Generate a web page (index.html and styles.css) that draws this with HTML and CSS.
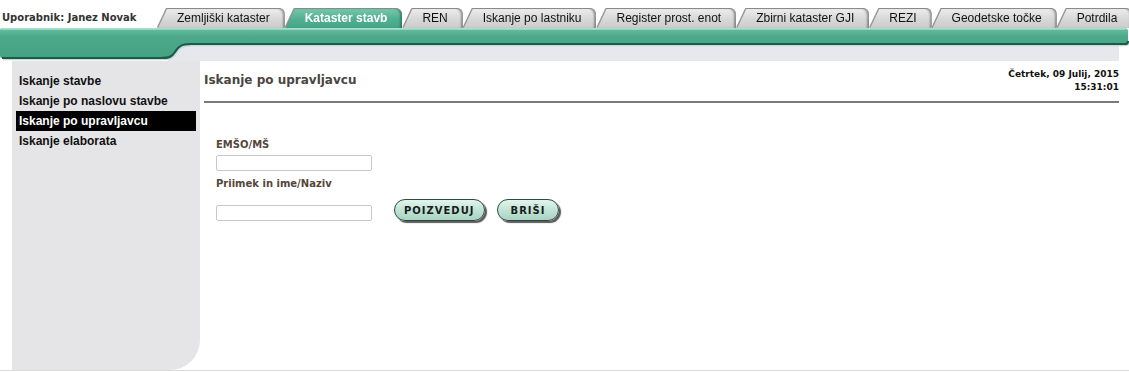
FILE: index.html
```html
<!DOCTYPE html>
<html lang="sl">
<head>
    <meta charset="UTF-8">
    <title>Kataster stavb - Iskanje po upravljavcu</title>
    <link rel="stylesheet" href="styles.css">
</head>
<body>
    <div class="top">
        <div class="user">Uporabnik: Janez Novak</div>
        <div class="tabs">
            <a class="tab">Zemljiški kataster</a>
            <a class="tab active">Kataster stavb</a>
            <a class="tab">REN</a>
            <a class="tab">Iskanje po lastniku</a>
            <a class="tab">Register prost. enot</a>
            <a class="tab">Zbirni kataster GJI</a>
            <a class="tab">REZI</a>
            <a class="tab">Geodetske točke</a>
            <a class="tab">Potrdila</a>
        </div>
    </div>

    <!-- zeleni trak pod zavihki -->
    <div class="band">
        <svg width="1129" height="33" viewBox="0 0 1129 33">
            <defs>
                <linearGradient id="g" x1="0" y1="0" x2="0" y2="30" gradientUnits="userSpaceOnUse">
                    <stop offset="0" stop-color="#a6ddc9"/>
                    <stop offset="0.08" stop-color="#5fb99a"/>
                    <stop offset="0.3" stop-color="#4caa8b"/>
                    <stop offset="1" stop-color="#44a283"/>
                </linearGradient>
            </defs>
            <rect x="168" y="14" width="951" height="19" fill="#e7e7ee"/>
            <path d="M0,2 Q0,0 2,0 H1125 Q1128,0 1128,3 V13 Q1128,16 1125,16 H191 C181,16 178,19 175,24 C172,29 169,30 161,30 H2 Q0,30 0,28 Z" fill="url(#g)"/>
            <path d="M1128,13 Q1128,16 1125,16 H191 C181,16 178,19 175,24 C172,29 169,30 161,30 H2" fill="none" stroke="#c9d9d3" stroke-width="1.5" transform="translate(1,1.5)"/>
            <path d="M1128,13 Q1128,16 1125,16 H191 C181,16 178,19 175,24 C172,29 169,30 161,30 H2" fill="none" stroke="#155e48" stroke-width="2.2"/>
            <path d="M2,1 H1125" stroke="#b8e6d6" stroke-width="1.2"/>
        </svg>
    </div>

    <div class="main">
        <div class="sidebar">
            <a class="menu-item">Iskanje stavbe</a>
            <a class="menu-item">Iskanje po naslovu stavbe</a>
            <a class="menu-item selected">Iskanje po upravljavcu</a>
            <a class="menu-item">Iskanje elaborata</a>
        </div>

        <div class="content">
            <div class="page-head">
                <h1>Iskanje po upravljavcu</h1>
                <div class="date">Četrtek, 09 Julij, 2015<br>15:31:01</div>
            </div>

            <form class="search-form">
                <label for="emso">EMŠO/MŠ</label>
                <input type="text" id="emso">

                <label for="naziv">Priimek in ime/Naziv</label>
                <div class="form-row">
                    <input type="text" id="naziv">
                    <button type="button" class="btn">POIZVEDUJ</button>
                    <button type="button" class="btn btn-clear">BRIŠI</button>
                </div>
            </form>
        </div>
    </div>
</body>
</html>
```

FILE: styles.css
```css
body {
    margin: 0;
    padding: 0;
    background-color: #fff;
    font-family: "DejaVu Sans", Verdana, sans-serif;
    color: #333;
}

a {
    text-decoration: none;
    cursor: pointer;
}

/* zgornja vrstica */
.top {
    height: 28px;
    display: flex;
    align-items: flex-end;
}

.user {
    flex: 0 0 156px;
    padding-left: 2px;
    font-size: 10px;
    font-weight: bold;
    color: #333;
    line-height: 12px;
    padding-bottom: 4px;
}

.tabs {
    display: flex;
    gap: 1px;
    filter: drop-shadow(0 -1px 0 #8a8a8a) drop-shadow(-1px 0 0 #9a9a9a);
}

.tab {
    flex-shrink: 0;
    white-space: nowrap;
    height: 19px;
    line-height: 19px;
    padding: 0 15px 0 19px;
    font-family: "Liberation Sans", Arial, sans-serif;
    font-size: 12px;
    color: #111;
    background: linear-gradient(#ececec, #d9d9d9 50%, #cbcbcb);
    border-top-right-radius: 6px;
    clip-path: polygon(9px 0, 100% 0, 100% 100%, 0 100%);
    box-shadow: inset -3px 0 2px -1px rgba(0, 0, 0, 0.35);
}

.tab.active {
    background: linear-gradient(#74c7a9, #52b192 50%, #45a586);
    color: #fff;
    font-weight: bold;
    box-shadow: inset -3px 0 2px -1px rgba(0, 60, 40, 0.4);
}

.band {
    height: 33px;
    line-height: 0;
}

/* glavni del */
.main {
    display: flex;
    height: 309px;
    border-bottom: 1px solid #dcdcdc;
}

.sidebar {
    margin-left: 12px;
    width: 180px;
    padding: 10px 4px;
    background-color: #e5e5e7;
    border-bottom-right-radius: 30px;
}

.menu-item {
    display: block;
    height: 20px;
    line-height: 20px;
    padding-left: 3px;
    font-family: "Liberation Sans", Arial, sans-serif;
    font-size: 12px;
    font-weight: bold;
    color: #111;
}

.menu-item.selected {
    background-color: #000;
    color: #fff;
}

.content {
    margin-left: 4px;
    width: 915px;
}

.page-head {
    display: flex;
    justify-content: space-between;
    align-items: flex-start;
    height: 40px;
    border-bottom: 2px solid #7a7a7a;
}

h1 {
    margin: 0;
    padding-top: 12px;
    font-size: 12px;
    line-height: 14px;
    color: #4a4640;
}

.date {
    padding-top: 7px;
    text-align: right;
    font-size: 9px;
    line-height: 13px;
    font-weight: bold;
    color: #111;
}

.search-form {
    padding: 35px 0 0 12px;
}

label {
    display: block;
    font-size: 10px;
    font-weight: bold;
    line-height: 14px;
    color: #54463a;
}

input {
    box-sizing: border-box;
    width: 156px;
    height: 16px;
    margin: 3px 0 6px 0;
    padding: 0 3px;
    border: 1px solid #c8c8c8;
    border-radius: 2px;
    display: block;
}

.form-row {
    display: flex;
    align-items: center;
    margin-top: 8px;
}

.form-row input {
    margin: 5px 22px 0 0;
}

.btn {
    height: 22px;
    padding: 0 9px;
    margin-right: 12px;
    border: 1px solid #2e4a40;
    border-radius: 11px;
    background: linear-gradient(#e3f4ed, #c4e5d8 45%, #a8d3c2);
    box-shadow: 2px 2px 1px #5a5a5a;
    font-family: "DejaVu Sans", Verdana, sans-serif;
    font-size: 10px;
    font-weight: bold;
    letter-spacing: 1px;
    color: #1a1a1a;
    cursor: pointer;
}

.btn-clear {
    padding: 0 13px;
}
```
